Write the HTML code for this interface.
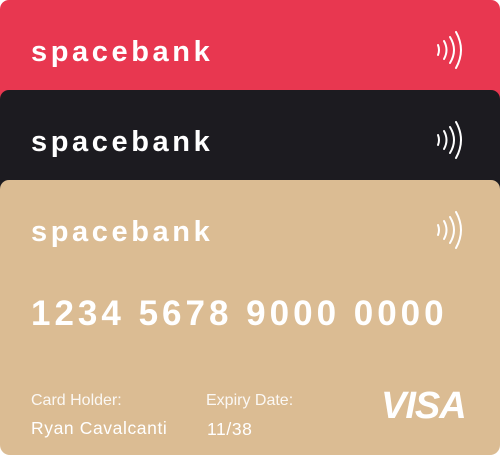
<!DOCTYPE html>
<html><head><style>
body{margin:0;width:500px;height:455px;background:#fff;overflow:hidden;font-family:"Liberation Sans",sans-serif;position:relative}
.c{position:absolute;left:0;width:500px;border-radius:9px}
.r{top:0;height:120px;background:#e83750}
.b{top:90px;height:120px;background:#1c1b20}
.t{top:180px;height:275px;background:#dbbc93;border-radius:9px 9px 10px 10px}
.n{position:absolute;left:31px;color:#fff;font-size:29px;font-weight:bold;letter-spacing:3.6px}
svg.w{position:absolute;left:436px}
.num{position:absolute;left:31px;top:294px;color:#fff;font-size:35px;font-weight:bold;letter-spacing:4px}
.lab{position:absolute;color:#fff;font-size:16px;opacity:.9}
.val{position:absolute;color:#fff;font-size:17.5px;letter-spacing:.6px}
</style></head><body>
<div class="c r"></div><div class="c b"></div><div class="c t"></div>
<div class="n" style="top:36px">spacebank</div>
<div class="n" style="top:126px">spacebank</div>
<div class="n" style="top:216px">spacebank</div>
<svg class="w" style="top:30px" width="30" height="40" viewBox="0 0 30 40" fill="none" stroke="#fff" stroke-width="2" stroke-linecap="round"><path d="M2 15q2 5 0 10"/><path d="M8 11q5 9 0 18"/><path d="M14 7q8 13 0 26"/><path d="M20 2q10 18 0 36"/></svg>
<svg class="w" style="top:120px" width="30" height="40" viewBox="0 0 30 40" fill="none" stroke="#fff" stroke-width="2" stroke-linecap="round"><path d="M2 15q2 5 0 10"/><path d="M8 11q5 9 0 18"/><path d="M14 7q8 13 0 26"/><path d="M20 2q10 18 0 36"/></svg>
<svg class="w" style="top:210px" width="30" height="40" viewBox="0 0 30 40" fill="none" stroke="#fff" stroke-width="2" stroke-linecap="round"><path d="M2 15q2 5 0 10"/><path d="M8 11q5 9 0 18"/><path d="M14 7q8 13 0 26"/><path d="M20 2q10 18 0 36"/></svg>
<div class="num">1234 5678 9000 0000</div>
<div class="lab" style="left:31px;top:392px">Card Holder:</div>
<div class="lab" style="left:206px;top:392px">Expiry Date:</div>
<div class="val" style="left:31px;top:418px">Ryan Cavalcanti</div>
<div class="val" style="left:207px;top:419px">11/38</div>
<div style="position:absolute;left:381px;top:385px;color:#fff;font-size:38px;font-weight:bold;font-style:italic;letter-spacing:-1px">VISA</div>
</body></html>
